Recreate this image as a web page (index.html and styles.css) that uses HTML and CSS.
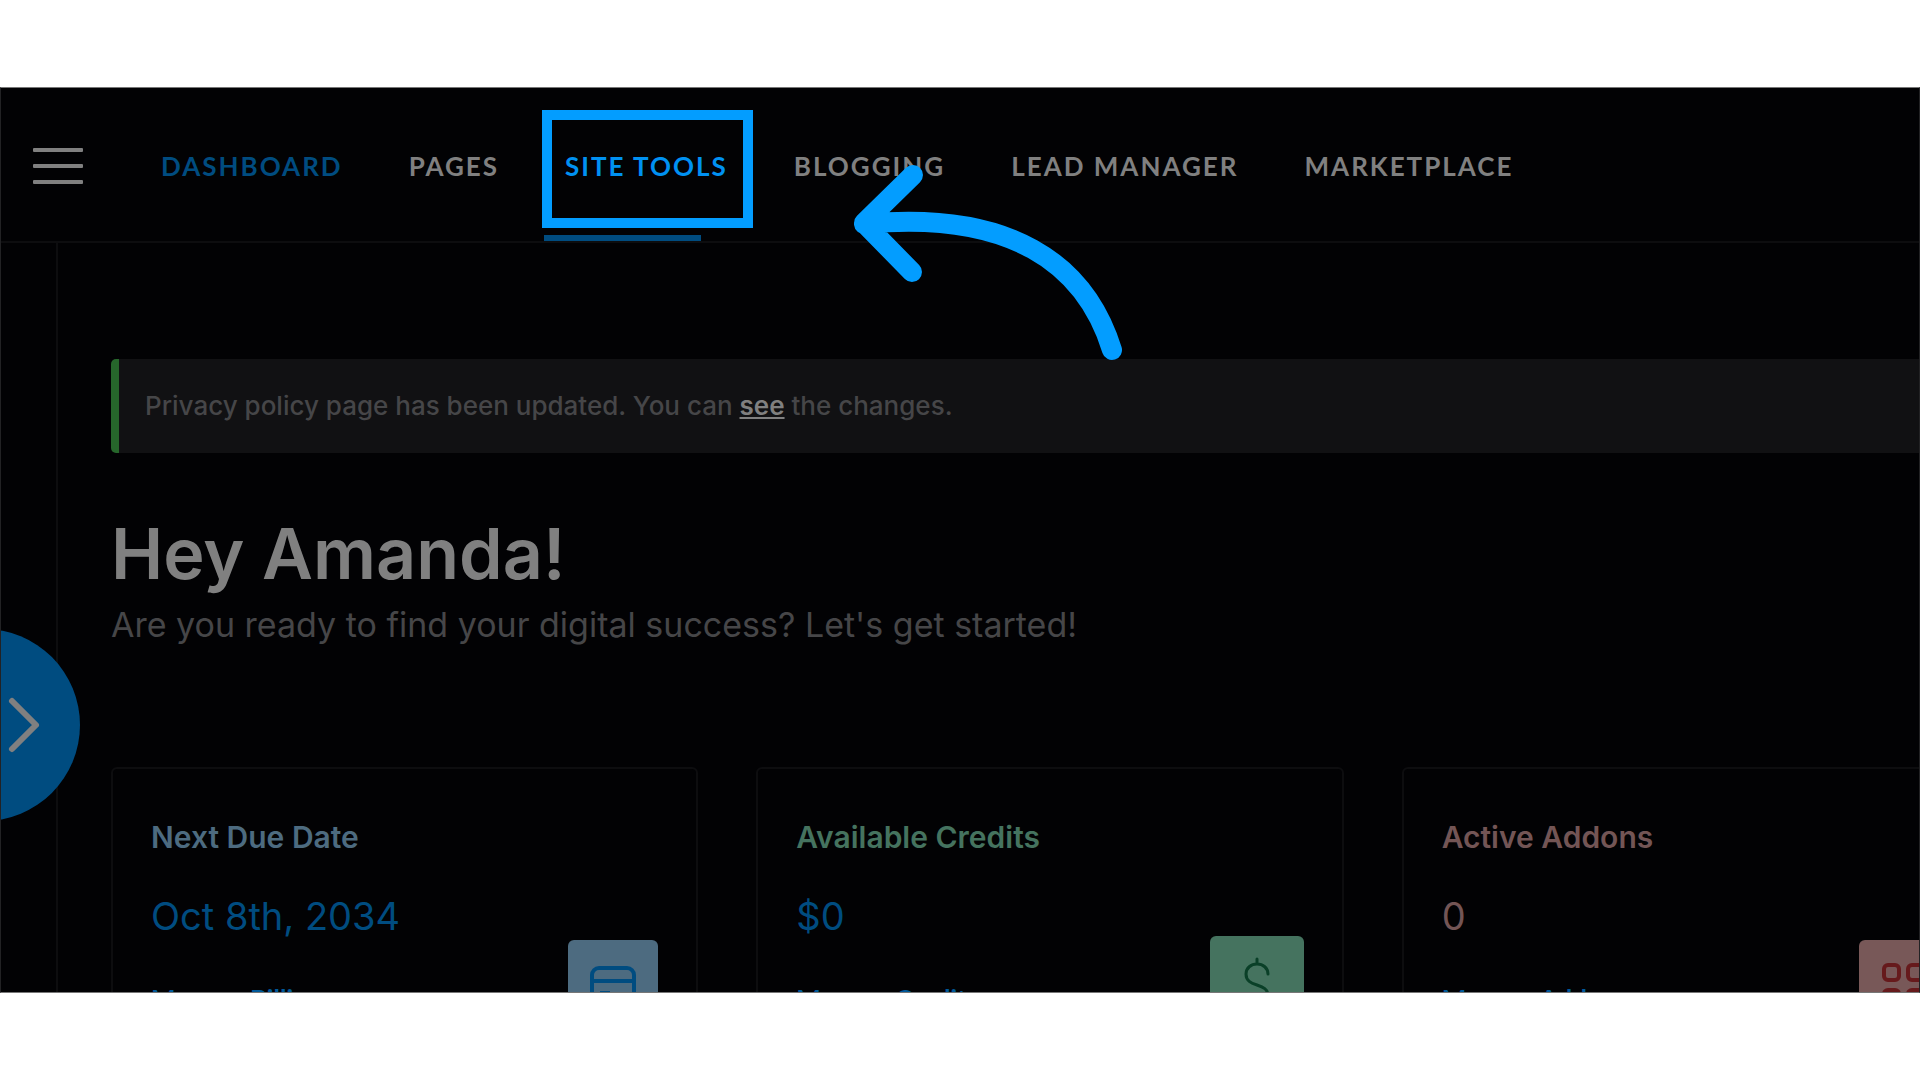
FILE: index.html
```
<!DOCTYPE html>
<html lang="en">
<head>
    <meta charset="UTF-8">
    <meta name="viewport" content="width=device-width, initial-scale=1.0">
    <title>Dashboard</title>
    <link rel="stylesheet" href="styles.css">
</head>
<body>
    <div class="stage">
        <!-- Top bar -->
        <header class="topbar">
            <button class="menu-button" aria-label="Menu">
                <span></span>
                <span></span>
                <span></span>
            </button>
            <nav class="main-nav">
                <a href="#" class="current">Dashboard</a>
                <a href="#">Pages</a>
                <a href="#" class="highlight">Site Tools</a>
                <a href="#">Blogging</a>
                <a href="#">Lead Manager</a>
                <a href="#">Marketplace</a>
            </nav>
        </header>

        <div class="layout">
            <aside class="sidebar"></aside>
            <main class="content">
                <div class="alert">
                    Privacy policy page has been updated. You can <a href="#">see</a> the changes.
                </div>

                <h1>Hey Amanda!</h1>
                <p class="intro">Are you ready to find your digital success? Let's get started!</p>

                <!-- Cards -->
                <div class="cards">
                    <section class="card card-due">
                        <h2>Next Due Date</h2>
                        <p class="value">Oct 8th, 2034</p>
                        <a href="#">Manage Billing</a>
                        <div class="tile">
                            <svg width="48" height="48" viewBox="0 0 48 48" fill="none" stroke="currentColor" stroke-width="4">
                                <rect x="3" y="3" width="42" height="42" rx="7"/>
                                <path d="M3 16h42M11 28h10"/>
                            </svg>
                        </div>
                    </section>
                    <section class="card card-credits">
                        <h2>Available Credits</h2>
                        <p class="value">$0</p>
                        <a href="#">Manage Credits</a>
                        <div class="tile">
                            <svg width="30" height="56" viewBox="0 0 30 56" fill="none" stroke="currentColor" stroke-width="3" stroke-linecap="round">
                                <path d="M15 2v5M15 49v5M26 17c0-6-5-10-11-10S4 11 4 17c0 7 5 9 11 11s11 4 11 11-5 10-11 10S4 45 4 38"/>
                            </svg>
                        </div>
                    </section>
                    <section class="card card-addons">
                        <h2>Active Addons</h2>
                        <p class="value">0</p>
                        <a href="#">Manage Addons</a>
                        <div class="tile">
                            <svg width="46" height="52" viewBox="0 0 46 52" fill="none" stroke="currentColor" stroke-width="4">
                                <rect x="3" y="2" width="15" height="15" rx="4"/>
                                <rect x="27" y="2" width="15" height="15" rx="4"/>
                                <rect x="3" y="27" width="15" height="15" rx="4"/>
                                <rect x="27" y="27" width="15" height="15" rx="4"/>
                            </svg>
                        </div>
                    </section>
                </div>
            </main>
        </div>

        <button class="drawer-button" aria-label="Open panel">
            <svg width="36" height="60" viewBox="0 0 36 60" fill="none" stroke="currentColor" stroke-width="6" stroke-linecap="round" stroke-linejoin="round">
                <path d="M6 6l24 24L6 54"/>
            </svg>
        </button>

        <!-- Pointer over the nav -->
        <svg class="pointer" width="280" height="210" viewBox="0 0 280 210" fill="none" stroke="currentColor" stroke-width="20" stroke-linecap="round" stroke-linejoin="round">
            <path d="M262 190C235 103 160 50 14 64M63 15L14 63l48 49"/>
        </svg>
    </div>
</body>
</html>
```
FILE: styles.css
```
* {
    margin: 0;
    padding: 0;
    box-sizing: border-box;
}

body {
    font-family: Inter, sans-serif;
    display: flex;
    height: 100vh;
    padding: 87px 0;
    background-color: white;
}

.stage {
    position: relative;
    flex: 1;
    min-width: 0;
    overflow: hidden;
    background-color: #020204;
    border: 1px solid #222224;
    border-top-color: #777;
    border-bottom-color: #777;
    color: #464648;
}

/* Top bar */
.topbar {
    display: flex;
    align-items: center;
    height: 155px;
    padding: 2px 0 0 32px;
    border-bottom: 2px solid #0d0d0f;
}

.menu-button {
    display: flex;
    flex-direction: column;
    gap: 12px;
    width: 50px;
    background: none;
    border: none;
    cursor: pointer;
}

.menu-button span {
    height: 4px;
    background-color: #808080;
    border-radius: 1px;
}

.main-nav {
    display: flex;
    gap: 66px;
    height: 100%;
    margin-left: 78px;
}

.main-nav a {
    display: flex;
    align-items: center;
    font-family: Lato, sans-serif;
    font-size: 26px;
    font-weight: 700;
    letter-spacing: 2px;
    text-transform: uppercase;
    text-decoration: none;
    white-space: nowrap;
    color: #808080;
}

.main-nav .current {
    color: #004c80;
}

.main-nav .highlight {
    position: relative;
    color: #0091f2;
}

/* Frame and active bar around Site Tools */
.main-nav .highlight::before {
    content: "";
    position: absolute;
    top: 20px;
    left: -23px;
    right: -25px;
    height: 98px;
    border: 10px solid #039dff;
}

.main-nav .highlight::after {
    content: "";
    position: absolute;
    top: 145px;
    left: -21px;
    width: 157px;
    height: 6px;
    background-color: #004c80;
}

/* Page */
.layout {
    display: flex;
    height: 100%;
}

.sidebar {
    width: 57px;
    border-right: 2px solid #0d0d0f;
}

.content {
    flex: 1;
    min-width: 0;
    padding: 116px 0 0 53px;
}

.alert {
    padding: 0 26px;
    border-left: 8px solid #26662b;
    border-radius: 5px 0 0 5px;
    background-color: #111113;
    font-size: 26px;
    font-weight: 500;
    line-height: 94px;
}

.alert a {
    font-weight: 600;
    color: #808080;
}

h1 {
    margin-top: 58px;
    font-size: 70px;
    font-weight: 600;
    line-height: 86px;
    color: #808080;
}

.intro {
    font-size: 34px;
    line-height: 56px;
}

/* Cards */
.cards {
    display: grid;
    grid-template-columns: repeat(3, 1fr);
    gap: 58px;
    margin-top: 114px;
    margin-right: -70px;
}

.card {
    position: relative;
    height: 300px;
    padding: 48px 38px;
    border: 2px solid #0d0d0f;
    border-radius: 6px;
}

.card h2 {
    font-size: 30px;
    font-weight: 600;
    line-height: 40px;
}

.card .value {
    margin: 31px 0 36px;
    font-size: 38px;
    line-height: 56px;
    color: #004c80;
}

.card a {
    font-family: Lato, sans-serif;
    font-size: 26px;
    font-weight: 700;
    line-height: 38px;
    text-decoration: none;
    color: #00599a;
}

.tile {
    position: absolute;
    right: 38px;
    top: 171px;
    display: flex;
    justify-content: center;
    align-items: center;
    width: 90px;
    height: 98px;
    border-radius: 6px;
}

.card-due h2 {
    color: #4d6b80;
}

.card-due .tile {
    background-color: #4d6b80;
    color: #004c80;
}

.card-credits h2 {
    color: #45735f;
}

.card-credits .tile {
    top: 167px;
    width: 94px;
    background-color: #45735f;
    color: #0a4028;
}

.card-addons h2,
.card-addons .value {
    color: #735555;
}

.card-addons .tile {
    background-color: #785858;
    color: #661a1c;
}

/* Drawer handle on the left edge */
.drawer-button {
    position: absolute;
    left: -113px;
    top: 541px;
    display: flex;
    justify-content: flex-end;
    align-items: center;
    width: 192px;
    height: 192px;
    padding-right: 38px;
    border: none;
    border-radius: 50%;
    background-color: #004c80;
    color: #808080;
    cursor: pointer;
}

.pointer {
    position: absolute;
    left: 849px;
    top: 72px;
    color: #039dff;
}
```
